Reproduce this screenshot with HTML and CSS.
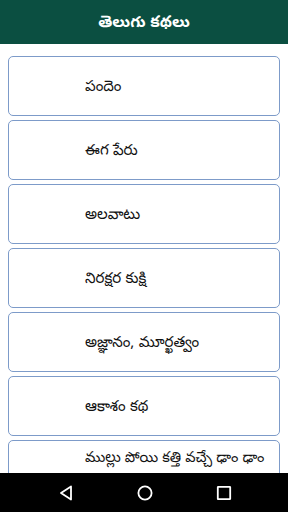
FILE: index.html
```html
<!DOCTYPE html>
<html lang="te">
<head>
  <meta charset="UTF-8" />
  <title>తెలుగు కథలు</title>
  <meta name="viewport" content="width=device-width, initial-scale=1.0" />
  <link rel="stylesheet" href="styles.css">
</head>
<body>
  <header>తెలుగు కథలు</header>

  <div class="stories">
    <div class="story">పందెం</div>
    <div class="story">ఈగ పేరు</div>
    <div class="story">అలవాటు</div>
    <div class="story">నిరక్షర కుక్షి</div>
    <div class="story">అజ్ఞానం, మూర్ఖత్వం</div>
    <div class="story">ఆకాశం కథ</div>
    <div class="story long">ముల్లు పోయి కత్తి వచ్చే ఢాం ఢాం</div>
  </div>

  <nav class="navbar">
    <svg width="16" height="16" viewBox="0 0 16 16"><path d="M13 1.5 L3 8 L13 14.5 Z" fill="none" stroke="#fff" stroke-width="1.8" stroke-linejoin="round"/></svg>
    <svg width="16" height="16" viewBox="0 0 16 16"><circle cx="8" cy="8" r="6.6" fill="none" stroke="#fff" stroke-width="1.8"/></svg>
    <svg width="16" height="16" viewBox="0 0 16 16"><rect x="1.8" y="1.8" width="12.4" height="12.4" rx="0.5" fill="none" stroke="#fff" stroke-width="1.8"/></svg>
  </nav>
</body>
</html>
```

FILE: styles.css
```css
body {
  margin: 0;
  width: 288px;
  height: 512px;
  overflow: hidden;
  position: relative;
  background: #fff;
  font-family: "Noto Sans Telugu", "Noto Sans", sans-serif;
}

header {
  height: 44px;
  box-sizing: border-box;
  padding-top: 3px;
  background: #0b4f41;
  color: #fff;
  font-size: 16px;
  font-weight: bold;
  display: flex;
  align-items: center;
  justify-content: center;
}

.stories {
  display: flex;
  flex-direction: column;
  gap: 4px;
  padding: 12px 8px;
}

.story {
  height: 58px;
  flex-shrink: 0;
  border: 1px solid #7d9bc9;
  border-radius: 5px;
  display: flex;
  align-items: center;
  padding-left: 76px;
  padding-top: 3px;
  box-sizing: border-box;
  height: 60px;
  font-size: 15px;
  color: #111;
}

/* title too long, sits near the top of its card */
.story.long {
  align-items: flex-start;
  padding-top: 8px;
  font-size: 14.5px;
  white-space: nowrap;
}

.navbar {
  position: absolute;
  left: 0;
  right: 0;
  bottom: 0;
  height: 39px;
  background: #000;
  display: flex;
  align-items: center;
  gap: 63px;
  padding-left: 58px;
}
```
